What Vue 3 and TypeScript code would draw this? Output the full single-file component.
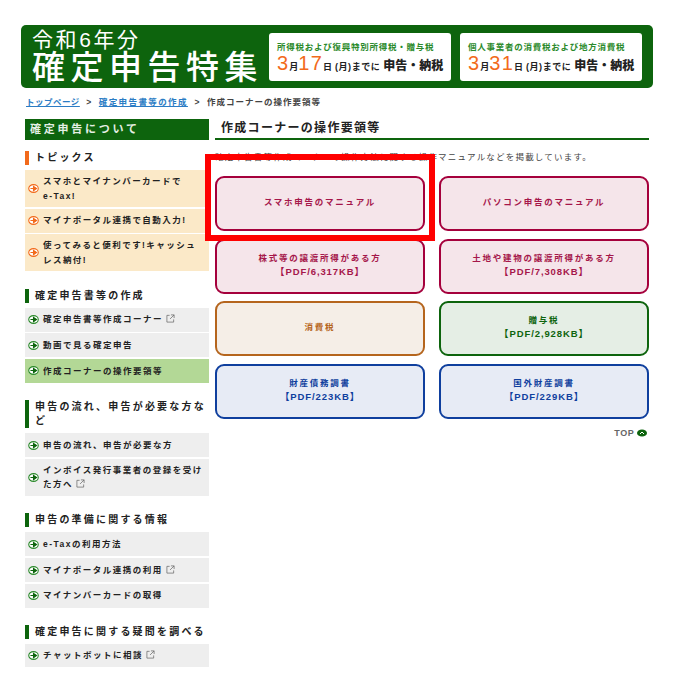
<template>
  <div class="page">
    <header class="banner">
      <div class="brand">
        <div class="year">令和6年分</div>
        <div class="big">確定申告特集</div>
      </div>
      <div v-for="d in deadlines" :key="d.label" class="deadline">
        <p class="label">{{ d.label }}</p>
        <p class="date">
          <b>3</b><i>月</i><b>{{ d.day }}</b><i>日</i><span>(月)までに</span><strong>申告・納税</strong>
        </p>
      </div>
    </header>

    <nav class="crumbs">
      <a>トップページ</a><em>&gt;</em><a>確定申告書等の作成</a><em>&gt;</em><span>作成コーナーの操作要領等</span>
    </nav>

    <div class="columns">
      <aside class="side">
        <h2 class="side-title">確定申告について</h2>
        <section v-for="g in groups" :key="g.title" class="group">
          <h3 :class="{ orange: g.topics }">{{ g.title }}</h3>
          <ul>
            <li v-for="item in g.items" :key="item.text" :class="{ topic: g.topics, current: item.current }">
              <svg class="arrow" viewBox="0 0 12 10" width="11" height="9">
                <ellipse cx="6" cy="5" rx="5.3" ry="4.3" fill="#fff" :stroke="g.topics ? '#f26a1b' : '#2b8a2b'" stroke-width="1.2" />
                <path d="M2.6 5h3.6M6 2.6 9.4 5 6 7.4z" :fill="g.topics ? '#f26a1b' : '#0d640d'" :stroke="g.topics ? '#f26a1b' : '#0d640d'" stroke-width="1.2" />
              </svg>
              <span class="txt">{{ item.text }}<svg v-if="item.ext" class="ext" viewBox="0 0 10 10" width="9" height="9">
                <path d="M4 1.5H1v7.5h7.5V6M5.5 1H9v3.5M9 1 4.5 5.5" fill="none" stroke="#666" stroke-width=".8" />
              </svg></span>
            </li>
          </ul>
        </section>
      </aside>

      <main class="content">
        <h1>作成コーナーの操作要領等</h1>
        <p class="lead">確定申告書等作成コーナーの操作方法に関する操作マニュアルなどを掲載しています。</p>
        <div class="cards">
          <a v-for="c in cards" :key="c.title" class="card" :class="c.tone">
            <span>{{ c.title }}</span>
            <span v-if="c.size" class="size">【PDF/{{ c.size }}KB】</span>
          </a>
          <div class="highlight"></div>
        </div>
        <div class="top">TOP <svg viewBox="0 0 10 8" width="10" height="8"><ellipse cx="5" cy="4" rx="5" ry="3.6" fill="#0d640d" /><path d="M3 5 5 3l2 2" fill="none" stroke="#fff" stroke-width="1" /></svg></div>
      </main>
    </div>
  </div>
</template>

<script setup lang="ts">
const deadlines = [
  { label: '所得税および復興特別所得税・贈与税', day: '17' },
  { label: '個人事業者の消費税および地方消費税', day: '31' },
]

const groups = [
  {
    title: 'トピックス',
    topics: true,
    items: [
      { text: 'スマホとマイナンバーカードで\ne-Tax!' },
      { text: 'マイナポータル連携で自動入力!' },
      { text: '使ってみると便利です!キャッシュ\nレス納付!' },
    ],
  },
  {
    title: '確定申告書等の作成',
    items: [
      { text: '確定申告書等作成コーナー', ext: true },
      { text: '動画で見る確定申告' },
      { text: '作成コーナーの操作要領等', current: true },
    ],
  },
  {
    title: '申告の流れ、申告が必要な方など',
    items: [
      { text: '申告の流れ、申告が必要な方' },
      { text: 'インボイス発行事業者の登録を受け\nた方へ', ext: true },
    ],
  },
  {
    title: '申告の準備に関する情報',
    items: [
      { text: 'e-Taxの利用方法' },
      { text: 'マイナポータル連携の利用', ext: true },
      { text: 'マイナンバーカードの取得' },
    ],
  },
  {
    title: '確定申告に関する疑問を調べる',
    items: [{ text: 'チャットボットに相談', ext: true }],
  },
] as { title: string; topics?: boolean; items: { text: string; ext?: boolean; current?: boolean }[] }[]

const cards = [
  { title: 'スマホ申告のマニュアル', tone: 'red' },
  { title: 'パソコン申告のマニュアル', tone: 'red' },
  { title: '株式等の譲渡所得がある方', size: '6,317', tone: 'red' },
  { title: '土地や建物の譲渡所得がある方', size: '7,308', tone: 'red' },
  { title: '消費税', tone: 'brown' },
  { title: '贈与税', size: '2,928', tone: 'green' },
  { title: '財産債務調書', size: '223', tone: 'blue' },
  { title: '国外財産調書', size: '229', tone: 'blue' },
]
</script>

<style>
html,
body {
  background: #fff;
}
</style>

<style scoped>
.page {
  width: 693px;
  height: 675px;
  overflow: hidden;
  padding-top: 25px;
  box-sizing: border-box;
  font-family: "Liberation Sans", "Noto Sans CJK JP", sans-serif;
  color: #222;
}
p,
h1,
h2,
h3,
ul {
  margin: 0;
  padding: 0;
}
ul {
  list-style: none;
}
.banner {
  margin-left: 21px;
  width: 632px;
  height: 63px;
  box-sizing: border-box;
  background: #0d640d;
  border-radius: 5px;
  display: flex;
  align-items: center;
  padding: 0 11px;
}
.brand {
  width: 237px;
  color: #fff;
  flex: none;
}
.year {
  font-size: 21px;
  line-height: 22px;
  letter-spacing: 2.6px;
  white-space: nowrap;
}
.big {
  font-size: 33px;
  line-height: 33px;
  letter-spacing: 5.5px;
  font-weight: 500;
  white-space: nowrap;
}
.deadline {
  width: 182px;
  height: 48px;
  box-sizing: border-box;
  background: #fff;
  border-radius: 3px;
  padding: 9px 0 0 8px;
  margin-right: 9px;
  flex: none;
}
.deadline:last-child {
  margin-right: 0;
}
.label {
  font-size: 8.5px;
  line-height: 11px;
  color: #2b8a2b;
  font-weight: 700;
  white-space: nowrap;
  letter-spacing: 0.75px;
}
.date {
  line-height: 18px;
  margin-top: 1px;
  white-space: nowrap;
  font-weight: 700;
  font-size: 9px;
}
.date b {
  font-size: 20px;
  color: #f26a1b;
  font-weight: 400;
  letter-spacing: 1.2px;
}
.date i {
  font-style: normal;
}
.date span {
  margin: 0 3px 0 3px;
  letter-spacing: 0.55px;
}
.date strong {
  font-size: 12px;
}
.crumbs {
  margin: 8px 0 0 26px;
  height: 12px;
  font-size: 8.5px;
  line-height: 12px;
  font-weight: 700;
  color: #444;
  letter-spacing: 1px;
  white-space: nowrap;
}
.crumbs a {
  color: #2b7cc4;
  text-decoration: underline;
  letter-spacing: 1.4px;
}
.crumbs a:first-child {
  letter-spacing: 0.5px;
}
.crumbs em {
  font-style: normal;
  margin: 0 6.5px;
}
.columns {
  display: flex;
  margin: 11px 0 0 25px;
  gap: 6px;
}
.side {
  width: 184px;
  flex: none;
}
.side-title {
  height: 21px;
  background: #0d640d;
  color: #e4efe4;
  font-size: 11px;
  line-height: 20px;
  padding-left: 5px;
  letter-spacing: 2.75px;
  font-weight: 700;
}
.group {
  margin-top: 17.5px;
}
.group:first-of-type {
  margin-top: 11px;
}
h3 {
  font-size: 10px;
  line-height: 14px;
  font-weight: 700;
  color: #222;
  letter-spacing: 2.2px;
  border-left: 4px solid #0d640d;
  padding-left: 6px;
  margin-bottom: 5px;
}
h3.orange {
  border-left-color: #f26a1b;
}
.group li {
  display: flex;
  align-items: center;
  min-height: 24px;
  background: #eeeeee;
  padding: 4px 3px 4px 3px;
  box-sizing: border-box;
  font-size: 8.5px;
  line-height: 14.5px;
  font-weight: 700;
  letter-spacing: 1.5px;
  white-space: pre-line;
}
.group li + li {
  margin-top: 1.6px;
}
.group li:only-child {
  min-height: 21.5px;
}
.group li.topic {
  background: #fbe9c8;
  letter-spacing: 1.45px;
}
.group li.current {
  background: #b3d896;
}
.arrow {
  flex: none;
  margin-right: 4px;
}
.txt {
  flex: 1;
}
.ext {
  margin-left: 3px;
  vertical-align: -1px;
}
.content {
  width: 434px;
  flex: none;
}
h1 {
  box-sizing: border-box;
  font-size: 12px;
  line-height: 18px;
  height: 21px;
  border-bottom: 2px solid #0d640d;
  padding-left: 6px;
  letter-spacing: 1.3px;
  font-weight: 700;
}
.lead {
  font-size: 8.5px;
  line-height: 12px;
  margin-top: 11px;
  letter-spacing: 1.2px;
  color: #444;
  white-space: nowrap;
}
.cards {
  position: relative;
  display: grid;
  grid-template-columns: 210px 210px;
  column-gap: 14px;
  row-gap: 7.5px;
  margin-top: 13px;
}
.card {
  height: 55px;
  box-sizing: border-box;
  border: 2px solid;
  border-radius: 9px;
  padding-bottom: 3px;
  display: flex;
  flex-direction: column;
  align-items: center;
  justify-content: center;
  font-size: 8.5px;
  line-height: 14px;
  font-weight: 700;
  letter-spacing: 1.75px;
}
.size {
  font-size: 9.5px;
  letter-spacing: 0.9px;
}
.red {
  color: #a5174a;
  border-color: #a5003c;
  background: #f5e5ea;
}
.brown {
  color: #b5651d;
  border-color: #b5651d;
  background: #f5eee7;
}
.green {
  color: #0d640d;
  border-color: #0d640d;
  background: #e5eee5;
}
.blue {
  color: #0f3f9e;
  border-color: #0f3f9e;
  background: #e7ebf5;
}
.highlight {
  position: absolute;
  left: -10px;
  top: -22px;
  width: 230px;
  height: 87px;
  box-sizing: border-box;
  border: 6px solid #ff0000;
  pointer-events: none;
}
.top {
  margin-top: 8px;
  text-align: right;
  padding-right: 2px;
  font-size: 9px;
  line-height: 12px;
  font-weight: 700;
  color: #666;
  letter-spacing: 0.5px;
}
.top svg {
  vertical-align: -1px;
}
</style>
